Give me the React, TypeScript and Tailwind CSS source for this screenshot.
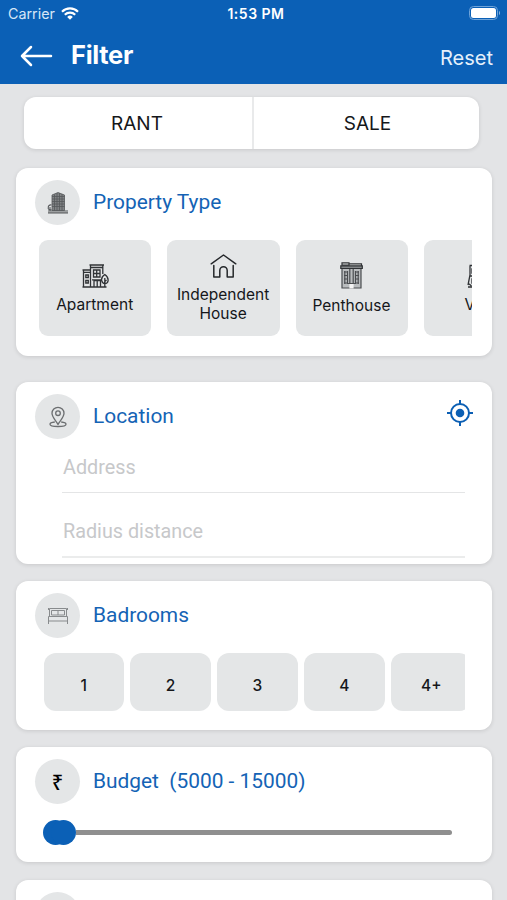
import type { ReactNode } from 'react';

const bedrooms = ['1', '2', '3', '4', '4+'];

const propertyTypes = [
  { name: 'Apartment', icon: <ApartmentIcon /> },
  { name: 'Independent House', icon: <HouseIcon /> },
  { name: 'Penthouse', icon: <PenthouseIcon /> },
  { name: 'Villa', icon: <VillaIcon /> },
];

function ApartmentIcon() {
  return (
    <svg width="27" height="24" viewBox="0 0 27 24" fill="none" stroke="#303336" strokeWidth="1.3">
      <path d="M.5 6H8M1.500 6v16.500M7.500 1h14.500M8.500 1v21.500M8.500 3.500h12M20.800 1.500v8.500M.5 23h24M2 8.300h6" />
      <path d="M3.800 11h2.500v2.500H3.800zM3.800 16.500h2.500V19H3.800z" />
      <path d="M11.500 6h6.500v7h-6.500zM14.700 6v7M11.500 9.500H18" />
      <path d="M12 23v-6.500h6.500V23M15.200 16.500V23M10 15.800h9.500" />
      <path d="M22.800 10.500c-2.200 1.500-3.600 4-3.100 6.200.4 1.900 1.700 2.900 3.100 2.900s3.100-1 3.300-2.900c.2-2.200-1-4.700-3.300-6.200zM22.800 14v9M22.800 17.500l1.700-1.500" />
    </svg>
  );
}

function HouseIcon() {
  return (
    <svg width="27" height="24" viewBox="0 0 27 24" fill="none" stroke="#25282b" strokeWidth="1.5" strokeLinecap="round" strokeLinejoin="round">
      <path d="M1.200 9.800 13.500 1l12.300 8.800" />
      <path d="M3.800 11.500V23h6v-6.500a3.700 3.700 0 0 1 7.400 0V23h6V11.500" />
    </svg>
  );
}

function PenthouseIcon() {
  return (
    <svg width="23" height="27" viewBox="0 0 23 27" fill="none" stroke="#4a4d50" strokeWidth="1.2">
      <path d="M2 6.500h19V26H2z" fill="#b9bcbe" />
      <path d="M2 .800h7v2.400H2zM9 1.800h12.500v3" stroke="#2f3235" />
      <path d="M.8 3.800h21.500v2.700H.8z" fill="#85888a" stroke="#2f3235" />
      <path d="M4.800 9v13M7.500 9v13M9.800 7v14M13.200 7v14M15.500 9v13M18.200 9v13" />
      <path d="M4 10h4M4 13.500h4M4 17h4M4 21h4M15 10h4M15 13.500h4M15 17h4M15 21h4M7.500 21.500h8" />
      <path d="M10 22.500h3V26h-3z" fill="#f4f4f4" stroke="#f4f4f4" />
    </svg>
  );
}

function VillaIcon() {
  return (
    <svg width="27" height="24" viewBox="0 0 27 24" fill="none" stroke="#2f3235" strokeWidth="1.300">
      <path d="M2.500 1.500H24M3 2v9L1 21M1 23h25M5 5h3v4H5zM2.500 12H24M5 15h3v4H5zM1 19l3.500 3M24 2v21" />
    </svg>
  );
}

function TowerIcon() {
  return (
    <svg width="22" height="23" viewBox="0 0 22 23" fill="none" stroke="#55585b" strokeWidth=".8">
      <path d="M5 19.500V4l6-2.500L17.500 4v15.500z" fill="#808385" />
      <path d="M7.500 3.500v16M10 2v17.500M12.500 2v17.500M15 3v16.500M5 5.500h12.500M5 8h12.500M5 10.500h12.500M5 13h12.500M5 15.500h12.500" />
      <path d="M1 20h20M1 21.800h20" strokeWidth="1.200" />
      <path d="M3 20v-4M4.500 14C2.500 13.500 1 15 1.300 16.500.8 18 2 18.800 3 18.800h1.500" strokeWidth="1.100" />
    </svg>
  );
}

function PinIcon() {
  return (
    <svg width="20" height="22" viewBox="0 0 20 22" fill="none" stroke="#6b6e70" strokeWidth="1.300" strokeLinejoin="round">
      <path d="M10 18.500C8.500 15 4 11.500 4 7.300a6 6 0 0 1 12 0C16 11.500 11.500 15 10 18.500z" />
      <circle cx="10" cy="7.200" r="2.300" />
      <path d="M6.800 16C4 16.300 2 17 2 18.200c0 1.500 3.500 2.300 8 2.300s8-.8 8-2.300c0-1.200-2-1.900-4.800-2.200" />
    </svg>
  );
}

function BedIcon() {
  return (
    <svg width="22" height="18" viewBox="0 0 22 18" fill="none" stroke="#888b8d" strokeWidth="1">
      <path d="M2.500 9V1.500h17V9M1.500 9.500h19v4.500h-19zM1.500 14v3M20.500 14v3" />
      <path d="M4.500 3.500h13V8h-13zM11 3.500V8" />
      <path d="M1.500 1v2M20.500 1v2" />
    </svg>
  );
}

function TargetIcon() {
  return (
    <svg width="26" height="26" viewBox="0 0 26 26" fill="none" stroke="#0b5fb4" strokeWidth="2">
      <circle cx="13" cy="13" r="9" />
      <circle cx="13" cy="13" r="4.300" fill="#0b5fb4" stroke="none" />
      <path d="M13 0v4M13 22v4M0 13h4M22 13h4" />
    </svg>
  );
}

function Card({ className, children }: { className: string; children: ReactNode }) {
  return (
    <section className={`mx-4 w-[476px] shrink-0 rounded-xl bg-white pt-3 shadow-[0_1px_4px_rgba(0,0,0,0.12)] ${className}`}>
      {children}
    </section>
  );
}

function CardTitle({ icon, title, children }: { icon?: ReactNode; title: string; children?: ReactNode }) {
  return (
    <div className="flex h-[45px] items-center pr-[19px] pl-[19px]">
      <span className="flex size-[45px] items-center justify-center rounded-full bg-[#e4e6e7]">{icon}</span>
      <h2 className="-mt-0.5 ml-[13px] whitespace-pre font-['Roboto',sans-serif] text-[20.900px] leading-6 text-[#1463b5]">{title}</h2>
      {children}
    </div>
  );
}

export default function App() {
  return (
    <main className="flex h-[900px] w-[507px] flex-col overflow-hidden bg-[#e3e4e6] font-['Inter',sans-serif] text-[#15171a]">
      <header className="h-[84px] shrink-0 bg-[#0b60b6] text-white">
        {/* Status bar */}
        <div className="grid h-7 grid-cols-3 items-center pr-1.5 pl-2">
          <div className="flex items-center gap-1.5 text-[14.300px] text-[#d6e6f7]">
            <span>Carrier</span>
            <svg className="-mt-0.5" width="18" height="13" viewBox="0 0 18 13" fill="none" stroke="white" strokeWidth="2.200">
              <path d="M1 4.700a11.500 11.500 0 0 1 16 0M3.800 7.700a7.500 7.500 0 0 1 10.400 0" />
              <path d="M9 12.700 6.200 9.900a4 4 0 0 1 5.600 0z" fill="white" stroke="none" />
            </svg>
          </div>
          <span className="-mt-0.5 pl-[3px] text-center text-[14px] font-semibold tracking-[0.500px]">1:53 PM</span>
          <svg className="-mt-0.5 justify-self-end" width="32" height="14" viewBox="0 0 32 14" fill="none">
            <rect x=".5" y=".5" width="28" height="13" rx="4" stroke="#6fa3d8" />
            <rect x="2" y="2" width="25" height="10" rx="2.500" fill="white" />
            <path d="M30 5v4c1.300-.4 1.300-3.600 0-4z" fill="#8cb5df" />
          </svg>
        </div>
        <div className="flex h-14 items-center pr-[14px] pl-5">
          <svg width="33" height="22" viewBox="0 0 33 22" fill="none" stroke="white" strokeWidth="2.500" strokeLinecap="round" strokeLinejoin="round">
            <path d="M31 11H2M11 2 2 11l9 9" />
          </svg>
          <h1 className="-mt-0.5 ml-[18px] text-[25.500px] font-bold tracking-[-0.3px]">Filter</h1>
          <button className="mt-[3px] ml-auto text-[20px] text-[#e5f0fb]">Reset</button>
        </div>
      </header>

      <div className="mt-[13px] ml-6 grid h-[52px] w-[455px] shrink-0 grid-cols-[230px_225px] divide-x-2 divide-[#e9eaeb] rounded-xl bg-white text-[19px] shadow-[0_1px_4px_rgba(0,0,0,0.12)]">
        <button className="pt-0.5 pr-0.5">RANT</button>
        <button className="pt-0.5 pl-0.5">SALE</button>
      </div>

      <Card className="mt-[19px] h-[188px]">
        <CardTitle icon={<TowerIcon />} title="Property Type" />
        <div className="mt-[15px] mr-5 ml-[23px] flex gap-4 overflow-hidden">
          {propertyTypes.map((type) => (
            <button
              key={type.name}
              className="flex h-24 w-[112.400px] shrink-0 flex-col items-center justify-center gap-[7px] rounded-[9px] bg-[#e4e6e7] px-2 pt-px text-[15.500px] leading-[19px]"
            >
              {type.icon}
              <span className="pr-px">{type.name}</span>
            </button>
          ))}
        </div>
      </Card>

      <Card className="mt-[26px] h-[182px]">
        <CardTitle icon={<PinIcon />} title="Location">
          <span className="-mt-[7px] ml-auto">
            <TargetIcon />
          </span>
        </CardTitle>
        <div className="mr-[27px] ml-[46px] font-['Roboto',sans-serif] text-[19.800px] text-[#c7c8ca]">
          <div className="flex h-[54px] items-center border-b border-[#e4e5e6] pt-1 pl-px">Address</div>
          <div className="flex h-[65px] items-end border-b-2 border-[#ebecec] pb-[9px] pl-px">Radius distance</div>
        </div>
      </Card>

      <Card className="mt-[17px] h-[149px]">
        <CardTitle icon={<BedIcon />} title="Badrooms" />
        <div className="mt-[15px] mr-[27px] ml-[27.500px] flex gap-[6.500px] overflow-hidden">
          {bedrooms.map((count) => (
            <button
              key={count}
              className="flex h-[58px] w-[80.400px] shrink-0 items-center justify-center rounded-xl bg-[#e4e6e7] pt-[7px] text-[15.500px] font-medium"
            >
              {count}
            </button>
          ))}
        </div>
      </Card>

      <Card className="mt-[17px] h-[115px]">
        <CardTitle
          icon={<span className="pt-0.5 font-['Noto_Sans',sans-serif] text-[20px] font-medium text-black">₹</span>}
          title="Budget  (5000 - 15000)"
        />
        <div className="mt-4 mr-10 ml-[26.500px] flex h-[25px] items-center">
          <span className="size-[25px] rounded-full bg-[#0b60b6]" />
          <span className="-ml-[17px] size-[25px] rounded-full bg-[#0b60b6]" />
          <span className="h-[5px] flex-1 rounded-r-full bg-[#8f8f8f]" />
        </div>
      </Card>

      <Card className="mt-[18px] h-[120px]">
        <CardTitle title="" />
      </Card>
    </main>
  );
}
